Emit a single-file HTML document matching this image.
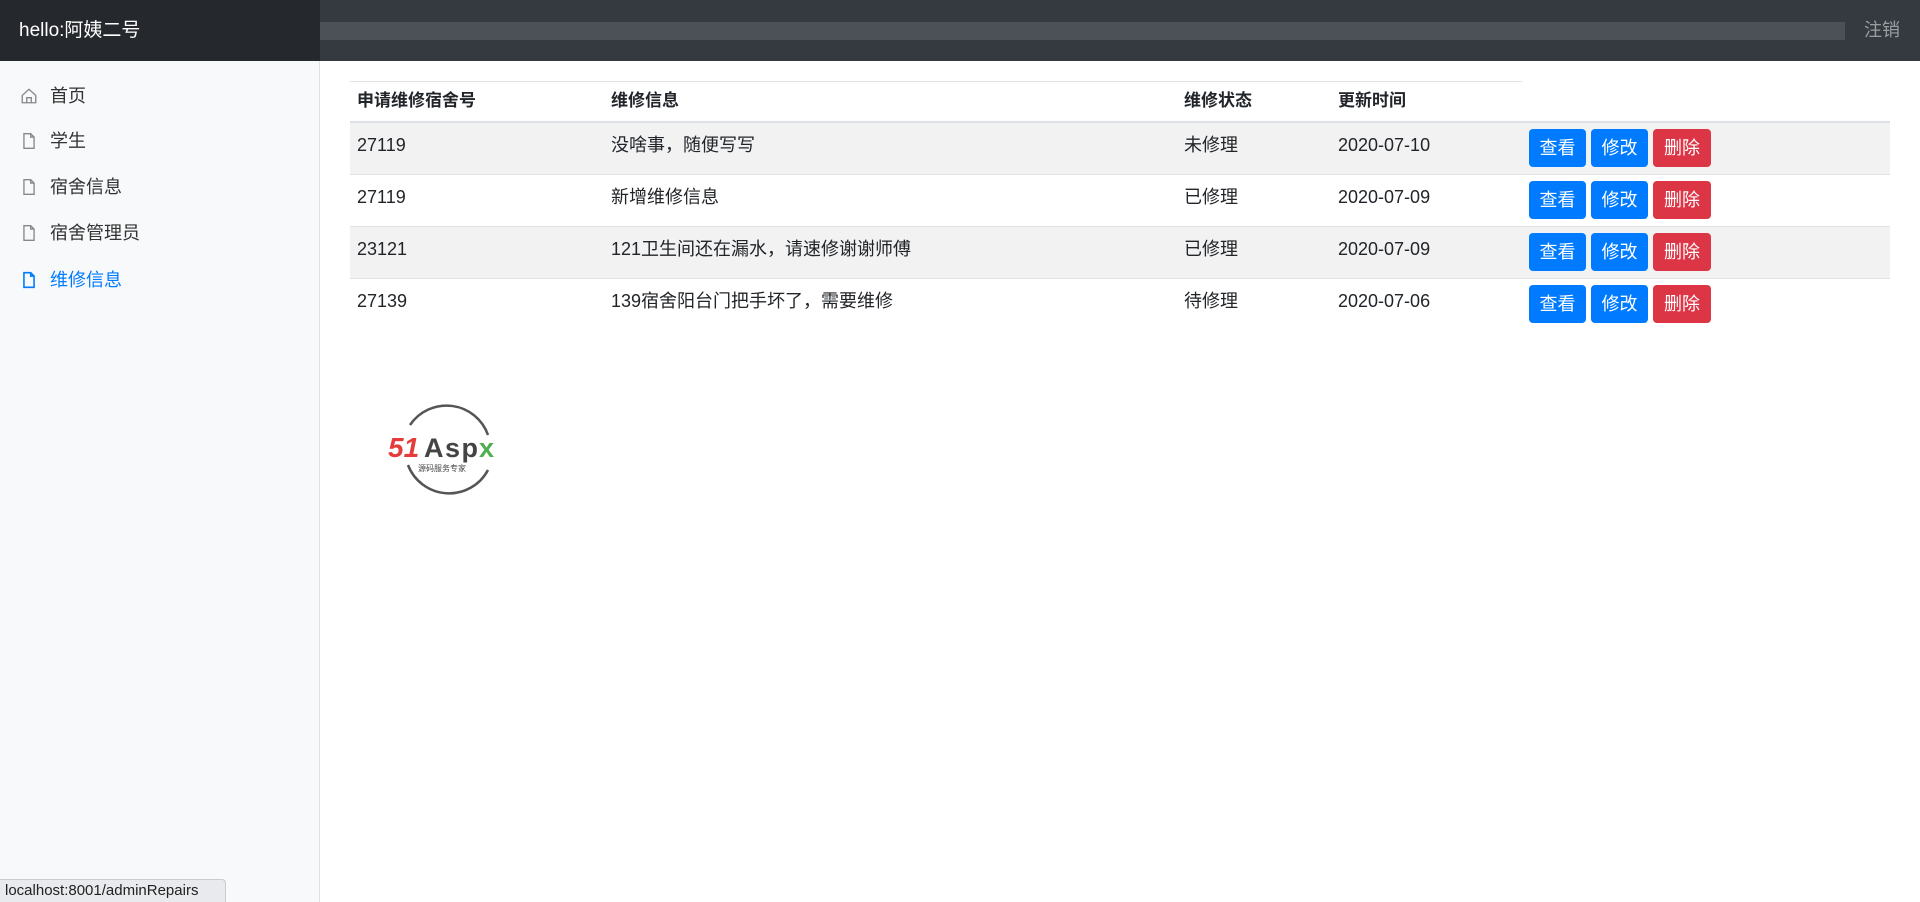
<!DOCTYPE html>
<html><head><meta charset="utf-8"><style>
*{box-sizing:border-box;margin:0;padding:0}
body{width:1920px;height:902px;overflow:hidden;font-family:"Liberation Sans","Noto Sans CJK SC",sans-serif;font-size:18px;color:#212529;background:#fff;position:relative}
.nav{position:absolute;left:0;top:0;width:1920px;height:61px;background:#343a40}
.brand{position:absolute;left:0;top:0;width:320px;height:61px;background:#25282c;color:#fff;font-size:19px;line-height:61px;padding-left:19px}
.search{position:absolute;left:320px;top:22px;width:1525px;height:18px;background:#4b5157}
.logout{position:absolute;left:1864px;top:0;line-height:61px;color:rgba(255,255,255,.5);font-size:18px}
.side{position:absolute;left:0;top:61px;width:320px;height:841px;background:#f8f9fa;border-right:1px solid #dee2e6}
.item{position:absolute;left:20px;height:30px;line-height:30px;color:#333;font-size:18px}
.item svg{position:absolute;left:0;top:6px}
.item span{position:absolute;left:30px;white-space:nowrap}
.item.act{color:#007bff}
table{position:absolute;left:350px;top:81px;border-collapse:collapse;table-layout:fixed;width:1540px}
.hb{position:absolute;left:350px;top:81px;width:1172px;height:1px;background:#dee2e6}
th{height:41px;text-align:left;font-weight:bold;padding-left:7px;vertical-align:middle;border-bottom:2px solid #dee2e6;font-size:17px;line-height:24px}
td{height:52px;padding-left:7px;vertical-align:top;padding-top:10px;border-top:1px solid #dee2e6;line-height:24px;white-space:nowrap}
tr.g td{background:#f2f2f2}
.b{display:inline-block;width:57px;height:38px;line-height:38px;text-align:center;color:#fff;background:#007bff;border-radius:4px;margin-right:5px;font-size:18px;vertical-align:top;margin-top:-4px}
.r{background:#dc3545;width:58px}
.status{position:absolute;left:0;bottom:0;height:23px;width:226px;background:#e8eaed;border:1px solid #ccc;border-left:0;border-bottom:0;border-radius:0 4px 0 0;font-size:15px;line-height:22px;padding-left:5px;color:#222}
</style></head><body>
<div class="nav"><div class="brand">hello:阿姨二号</div><div class="search"></div><div class="logout">注销</div></div>
<div class="side">
<div class="item" style="top:20px"><svg width="18" height="18" viewBox="0 0 16 16" fill="none" stroke="#888" stroke-width="1.2"><path d="M2 7.5L8 2l6 5.5V14H2z"/><path d="M6 14V9.5h4V14"/></svg><span>首页</span></div>
<div class="item" style="top:65px"><svg width="18" height="18" viewBox="0 0 16 16" fill="none" stroke="#888" stroke-width="1.2"><path d="M3.5 1.5h6l3 3v10h-9z"/><path d="M9.5 1.5v3h3"/></svg><span>学生</span></div>
<div class="item" style="top:111px"><svg width="18" height="18" viewBox="0 0 16 16" fill="none" stroke="#888" stroke-width="1.2"><path d="M3.5 1.5h6l3 3v10h-9z"/><path d="M9.5 1.5v3h3"/></svg><span>宿舍信息</span></div>
<div class="item" style="top:157px"><svg width="18" height="18" viewBox="0 0 16 16" fill="none" stroke="#888" stroke-width="1.2"><path d="M3.5 1.5h6l3 3v10h-9z"/><path d="M9.5 1.5v3h3"/></svg><span>宿舍管理员</span></div>
<div class="item act" style="top:204px"><svg width="18" height="18" viewBox="0 0 16 16" fill="none" stroke="#007bff" stroke-width="1.4"><path d="M3.5 1.5h6l3 3v10h-9z"/><path d="M9.5 1.5v3h3"/></svg><span>维修信息</span></div>
</div>
<div class="hb"></div>
<table>
<colgroup><col style="width:254px"><col style="width:573px"><col style="width:154px"><col style="width:191px"><col style="width:368px"></colgroup>
<tr><th>申请维修宿舍号</th><th>维修信息</th><th>维修状态</th><th>更新时间</th><th></th></tr>
<tr class="g"><td>27119</td><td>没啥事，随便写写</td><td>未修理</td><td>2020-07-10</td><td><span class="b">查看</span><span class="b">修改</span><span class="b r">删除</span></td></tr>
<tr><td>27119</td><td>新增维修信息</td><td>已修理</td><td>2020-07-09</td><td><span class="b">查看</span><span class="b">修改</span><span class="b r">删除</span></td></tr>
<tr class="g"><td>23121</td><td>121卫生间还在漏水，请速修谢谢师傅</td><td>已修理</td><td>2020-07-09</td><td><span class="b">查看</span><span class="b">修改</span><span class="b r">删除</span></td></tr>
<tr><td>27139</td><td>139宿舍阳台门把手坏了，需要维修</td><td>待修理</td><td>2020-07-06</td><td><span class="b">查看</span><span class="b">修改</span><span class="b r">删除</span></td></tr>
</table>
<svg style="position:absolute;left:380px;top:395px" width="140" height="110" viewBox="0 0 140 110">
<path d="M30 30 A44 44 0 0 1 108 40" fill="none" stroke="#555" stroke-width="2.5"/>
<path d="M108 75 A44 44 0 0 1 28 70" fill="none" stroke="#555" stroke-width="2.5"/>
<text x="8" y="62" font-family="Liberation Sans" font-weight="bold" font-style="italic" font-size="28" fill="#e53b3b">51</text>
<text x="44" y="62" font-family="Liberation Sans" font-weight="bold" font-size="27" fill="#444" textLength="54">Asp</text>
<text x="99" y="62" font-family="Liberation Sans" font-weight="bold" font-size="27" fill="#4caf50">x</text>
<text x="38" y="76" font-family="Noto Sans CJK SC" font-size="8" fill="#444">源码服务专家</text>
</svg>
<div class="status">localhost:8001/adminRepairs</div>
</body></html>
